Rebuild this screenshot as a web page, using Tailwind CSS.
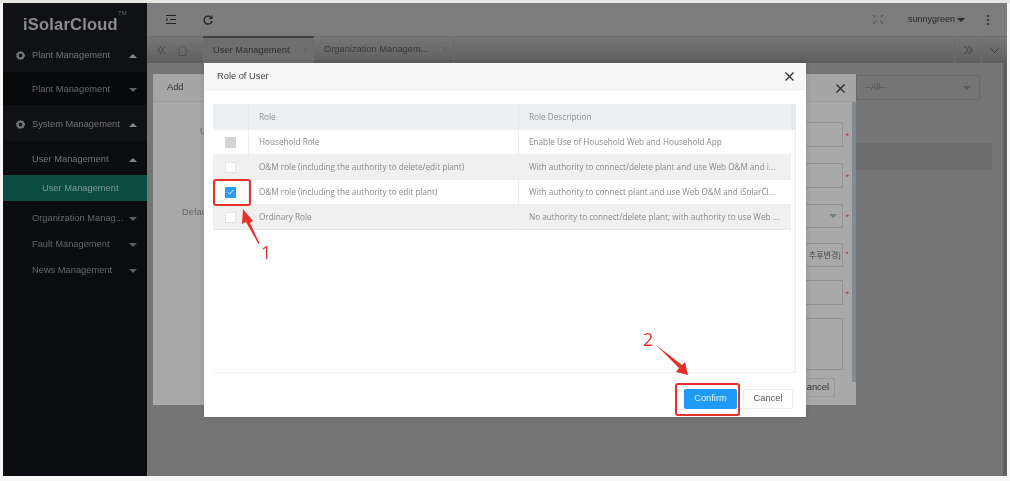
<!DOCTYPE html>
<html lang="en">
<head>
  <meta charset="UTF-8">
  <meta name="viewport" content="width=device-width, initial-scale=1.0">
  <script src="https://cdn.jsdelivr.net/npm/@tailwindcss/browser@4"></script>
  <title>iSolarCloud</title>
</head>
<body class="bg-white">
<div class="relative w-[1010px] h-[481px] overflow-hidden whitespace-nowrap bg-[#f7f7f7] font-['Liberation_Sans',sans-serif] blur-[0.6px]">
  <div class="h-[3px] bg-[#e8e6e2]"></div>
  <div class="flex h-[473px] ml-[3px] mr-[3px]">

    <!-- sidebar -->
    <aside class="w-[144px] shrink-0 bg-[#0b0c0f] text-[#666768] text-[9.3px]">
      <div class="h-[33px] relative pl-[20px] pt-[9px] text-[16.5px] leading-[24px] font-bold tracking-[0.2px] text-[#8c8c8c] bg-[#101114]">iSolarCloud<span class="absolute left-[115px] top-[6px] text-[6px] leading-[8px] font-normal text-[#666]">TM</span></div>
      <div class="h-[36px] pt-[3px] flex items-center pl-[13px] pr-[10px] bg-[#101114] text-[#737475]">
        <svg class="w-[9px] h-[9px] mr-[3px]" viewBox="0 0 10 10"><circle cx="5" cy="5" r="3.2" fill="none" stroke="#77787a" stroke-width="2.2"/><circle cx="5" cy="5" r="4.4" fill="none" stroke="#77787a" stroke-width="1.2" stroke-dasharray="1.4 1.4"/></svg>
        <span class="ml-[4px] flex-1">Plant Management</span>
        <svg class="w-[8px] h-[4px]" viewBox="0 0 8 4"><path d="M0 4L4 0L8 4Z" fill="#85868a"/></svg>
      </div>
      <div class="h-[33px] pt-[3px] flex items-center pl-[29px] pr-[10px] bg-[#08090b]">
        <span class="flex-1">Plant Management</span>
        <svg class="w-[8px] h-[4px]" viewBox="0 0 8 4"><path d="M0 0L8 0L4 4Z" fill="#5f6063"/></svg>
      </div>
      <div class="h-[36px] pt-[3px] flex items-center pl-[13px] pr-[10px] bg-[#101114] text-[#737475]">
        <svg class="w-[9px] h-[9px] mr-[3px]" viewBox="0 0 10 10"><circle cx="5" cy="5" r="3.2" fill="none" stroke="#77787a" stroke-width="2.2"/><circle cx="5" cy="5" r="4.4" fill="none" stroke="#77787a" stroke-width="1.2" stroke-dasharray="1.4 1.4"/></svg>
        <span class="ml-[4px] flex-1">System Management</span>
        <svg class="w-[8px] h-[4px]" viewBox="0 0 8 4"><path d="M0 4L4 0L8 4Z" fill="#85868a"/></svg>
      </div>
      <div class="h-[34px] pt-[3px] flex items-center pl-[29px] pr-[10px] text-[#737475]">
        <span class="flex-1">User Management</span>
        <svg class="w-[8px] h-[4px]" viewBox="0 0 8 4"><path d="M0 4L4 0L8 4Z" fill="#85868a"/></svg>
      </div>
      <div class="h-[26px] pt-[2px] flex items-center pl-[39px] bg-[#0a4c42] text-[#7e9a94]">User Management</div>
      <div class="h-[33px] pt-[2px] flex items-center pl-[29px] pr-[10px]">
        <span class="flex-1">Organization Manag...</span>
        <svg class="w-[8px] h-[4px]" viewBox="0 0 8 4"><path d="M0 0L8 0L4 4Z" fill="#5f6063"/></svg>
      </div>
      <div class="h-[26px] -mt-[3px] pt-[2px] flex items-center pl-[29px] pr-[10px]">
        <span class="flex-1">Fault Management</span>
        <svg class="w-[8px] h-[4px]" viewBox="0 0 8 4"><path d="M0 0L8 0L4 4Z" fill="#5f6063"/></svg>
      </div>
      <div class="h-[26px] pt-[2px] flex items-center pl-[29px] pr-[10px]">
        <span class="flex-1">News Management</span>
        <svg class="w-[8px] h-[4px]" viewBox="0 0 8 4"><path d="M0 0L8 0L4 4Z" fill="#5f6063"/></svg>
      </div>
    </aside>

    <!-- main -->
    <div class="flex-1 flex flex-col bg-[#747474] text-[#2f2f2f]">
      <header class="h-[33px] flex items-center bg-[#7c7c7c] text-[9px]">
        <svg class="ml-[19px] w-[10px] h-[9px]" viewBox="0 0 10 9" fill="none" stroke="#222" stroke-width="1"><path d="M0 .5H10M4 4.5H10M0 8.5H10M0 3L2 4.5L0 6"/></svg>
        <svg class="ml-[27px] w-[10px] h-[10px]" viewBox="0 0 10 10" fill="none" stroke="#222" stroke-width="1.3"><path d="M8.6 3.2A4 4 0 1 0 9 6"/><path d="M9 .6V3.6H6" stroke-width="1"/></svg>
        <svg class="ml-auto w-[10px] h-[9px]" viewBox="0 0 10 9" fill="none" stroke="#505050" stroke-width=".8"><path d="M0 0L3 3M0 2V0H2M10 0L7 3M8 0H10V2M0 9L3 6M0 7V9H2M10 9L7 6M8 9H10V7"/></svg>
        <span class="ml-[25px] text-[#2a2a2a]">sunnygreen</span>
        <svg class="ml-[2px] w-[8px] h-[4px]" viewBox="0 0 8 4"><path d="M0 0L8 0L4 4Z" fill="#2a2a2a"/></svg>
        <span class="ml-[22px] mr-[18px] w-[2px] h-[10px] border-l-2 border-dotted border-[#3a3a3a]"></span>
      </header>
      <nav class="h-[27px] flex items-center bg-linear-to-b from-[#777] to-[#5f5f5f] text-[9.3px] border-t border-[#6f6f6f]">
        <div class="w-[29px] flex justify-center">
          <svg class="w-[9px] h-[8px]" viewBox="0 0 9 8" fill="none" stroke="#333" stroke-width=".8"><path d="M4.500 0L.7 4L4.500 8M8.500 0L4.700 4L8.500 8"/></svg>
        </div>
        <svg class="ml-[1px] w-[11px] h-[11px]" viewBox="0 0 11 11" fill="none" stroke="#4a4a4a" stroke-width=".8"><path d="M.5 5.500L5.500 .7L10.500 5.500M2 4.500V10.500H9V4.500"/></svg>
        <div class="ml-[15px] w-[111px] h-[27px] -mt-[1px] flex items-center pl-[10px] border-t-2 border-[#3f3f3f] bg-[#6e6e6e]">User Management<span class="ml-[13px] text-[#5d5d5d]">×</span></div>
        <div class="w-[140px] h-[26px] flex items-center pl-[10px] border-r border-[#6a6a6a] text-[#383838]">Organization Managem...<span class="ml-[14px] text-[#5d5d5d]">×</span></div>
        <div class="ml-auto w-[27px] h-full border-l border-[#6c6c6c] flex items-center justify-center">
          <svg class="w-[9px] h-[8px]" viewBox="0 0 9 8" fill="none" stroke="#333" stroke-width=".8"><path d="M.5 0L4.300 4L.5 8M4.500 0L8.300 4L4.500 8"/></svg>
        </div>
        <div class="w-[26px] h-full border-l border-[#6c6c6c] flex items-center justify-center">
          <svg class="w-[9px] h-[5px]" viewBox="0 0 9 5" fill="none" stroke="#333" stroke-width=".9"><path d="M.5 .5L4.500 4.500L8.500 .5"/></svg>
        </div>
      </nav>
      <div class="flex-1 relative flex items-start justify-end pt-[12px] pr-[27px] bg-[#757575]">
        <div class="w-[124px] h-[25px] border border-[#6a6a6a] flex items-center justify-between pl-[8px] pr-[8px] text-[8.500px] text-[#555]">--All--
          <svg class="w-[8px] h-[4px]" viewBox="0 0 8 4"><path d="M0 0L8 0L4 4Z" fill="#5a5a5a"/></svg>
        </div>
        <div class="absolute right-[15px] top-[80px] w-[140px] h-[27px] bg-[#6d6d6d]"></div>
        <div class="absolute right-0 top-0 w-[4px] h-[413px] bg-[#5e5e5e]"></div>
      </div>
    </div>
  </div>

  <!-- add dialog, under the role dialog -->
  <div class="absolute left-[153px] top-[74px] w-[703px] h-[331px] flex flex-col bg-[#a9a9a9] text-[#333] text-[9.300px]">
    <div class="h-[28px] pt-[1px] shrink-0 flex items-center justify-between pl-[14px] pr-[11px] bg-[#a6a6a6] border-b border-[#9c9c9c]">
      <span>Add</span>
      <svg class="w-[9px] h-[9px]" viewBox="0 0 9 9" stroke="#2a2a2a" stroke-width="1.300"><path d="M.5 .5L8.500 8.500M8.500 .5L.5 8.500"/></svg>
    </div>
    <div class="relative flex-1 flex flex-col items-end pr-[13px] pt-[20px] text-[#666]">
      <div class="absolute right-0 top-0 w-[4px] h-[280px] bg-[#808a90]"></div>
      <span class="absolute left-[47px] top-[23px]">User</span>
      <span class="absolute left-[29px] top-[104px]">Default</span>
      <div class="relative w-[300px] h-[25px] border border-[#929292]"><span class="absolute -right-[7px] top-[7px] text-[#b03a3a]">*</span></div>
      <div class="relative w-[300px] h-[25px] mt-[16px] border border-[#929292]"><span class="absolute -right-[7px] top-[7px] text-[#b03a3a]">*</span></div>
      <div class="relative w-[300px] h-[24px] mt-[16px] border border-[#929292] flex items-center justify-end pr-[5px]">
        <svg class="w-[8px] h-[4px]" viewBox="0 0 8 4"><path d="M0 0L8 0L4 4Z" fill="#7d7d7d"/></svg>
        <span class="absolute -right-[7px] top-[6px] text-[#b03a3a]">*</span>
      </div>
      <div class="relative w-[300px] h-[24px] mt-[15px] border border-[#929292] flex items-center justify-end pr-[1px] text-[8px] text-[#444] font-['Noto_Sans_CJK_KR','Liberation_Sans',sans-serif]">추후변경)<span class="absolute -right-[7px] top-[5px] text-[#b03a3a]">*</span></div>
      <div class="relative w-[300px] h-[25px] mt-[13px] border border-[#929292]"><span class="absolute -right-[7px] top-[7px] text-[#b03a3a]">*</span></div>
      <div class="w-[300px] h-[52px] mt-[13px] border border-[#929292]"></div>
    </div>
    <div class="absolute right-[21px] bottom-[8px] w-[60px] h-[19px] pt-[1px] border border-[#999] flex items-center justify-end pr-[5px] text-[#333]">Cancel</div>
  </div>

  <!-- role dialog -->
  <div class="absolute left-[204px] top-[63px] w-[602px] h-[354px] flex flex-col bg-white shadow-[0_0_6px_rgba(0,0,0,0.15)] font-['Open_Sans',sans-serif] text-[8.200px] text-[#8a8a8a]">
    <div class="h-[27px] pt-[1px] shrink-0 flex items-center justify-between pl-[13px] pr-[12px] bg-[#f7f7f7] border-b border-[#eeeeee] font-['Liberation_Sans',sans-serif] text-[9.300px] text-[#444]">
      <span>Role of User</span>
      <svg class="w-[9px] h-[9px]" viewBox="0 0 9 9" stroke="#333" stroke-width="1.300"><path d="M.5 .5L8.500 8.500M8.500 .5L.5 8.500"/></svg>
    </div>
    <div class="ml-[9px] mt-[14px] w-[583px] h-[269px] border-r border-b border-[#eeeeee]">
      <div class="h-[26px] grid grid-cols-[36px_270px_272px_5px] items-stretch bg-[#edf0f3] text-[#8d9094]">
        <div class="border-r border-[#e4e7ea]"></div>
        <div class="flex items-center pl-[10px] border-r border-[#e4e7ea]">Role</div>
        <div class="flex items-center pl-[10px]">Role Description</div>
        <div class="bg-[#e6e8ea]"></div>
      </div>
      <div class="w-[578px] h-[24px] grid grid-cols-[36px_270px_272px] items-stretch bg-white">
        <div class="flex items-center justify-center border-r border-[#eeeeee]"><span class="w-[11px] h-[11px] bg-[#d4d4d4]"></span></div>
        <div class="flex items-center pl-[10px] border-r border-[#eeeeee]">Household Role</div>
        <div class="flex items-center pl-[10px]">Enable Use of Household Web and Household App</div>
      </div>
      <div class="w-[578px] h-[26px] grid grid-cols-[36px_270px_272px] items-stretch bg-[#f0f0f0]">
        <div class="flex items-center justify-center border-r border-[#eeeeee]"><span class="w-[11px] h-[11px] bg-white border border-[#e4e4e4]"></span></div>
        <div class="flex items-center pl-[10px] border-r border-[#eeeeee]">O&amp;M role (including the authority to delete/edit plant)</div>
        <div class="flex items-center pl-[10px]">With authority to connect/delete plant and use Web O&amp;M and i...</div>
      </div>
      <div class="w-[578px] h-[24px] grid grid-cols-[36px_270px_272px] items-stretch bg-white">
        <div class="flex items-center justify-center border-r border-[#eeeeee]">
          <span class="w-[11px] h-[11px] bg-[#2c9cf2] flex items-center justify-center">
            <svg class="w-[7px] h-[6px]" viewBox="0 0 7 6" fill="none" stroke="#dff0fc" stroke-width="1"><path d="M.5 3L2.700 5L6.500 .8"/></svg>
          </span>
        </div>
        <div class="flex items-center pl-[10px] border-r border-[#eeeeee]">O&amp;M role (including the authority to edit plant)</div>
        <div class="flex items-center pl-[10px]">With authority to connect plant and use Web O&amp;M and iSolarCl...</div>
      </div>
      <div class="w-[578px] h-[26px] grid grid-cols-[36px_270px_272px] items-stretch bg-[#f0f0f0] border-b border-[#e9e9e9]">
        <div class="flex items-center justify-center pt-[1px] border-r border-[#eeeeee]"><span class="w-[11px] h-[11px] bg-white border border-[#e4e4e4]"></span></div>
        <div class="flex items-center pl-[10px] pt-[1px] border-r border-[#eeeeee]">Ordinary Role</div>
        <div class="flex items-center pl-[10px] pt-[1px]">No authority to connect/delete plant; with authority to use Web ...</div>
      </div>
    </div>
    <div class="flex justify-end gap-[6px] mt-[16px] pr-[13px] font-['Liberation_Sans',sans-serif] text-[9.300px]">
      <button class="w-[53px] h-[20px] rounded-[2px] bg-[#1f9bf5] text-[#e6f4fe]">Confirm</button>
      <button class="w-[50px] h-[20px] bg-white border border-[#eeeeee] text-[#555]">Cancel</button>
    </div>
  </div>

  <!-- red annotations -->
  <div class="absolute left-[213px] top-[179px] w-[38px] h-[27px] border-2 border-[#e8302a] rounded-[3px]"></div>
  <div class="absolute left-[675px] top-[383px] w-[65px] h-[33px] border-2 border-[#e8302a] rounded-[3px]"></div>
  <svg class="absolute left-0 top-0 w-[1010px] h-[481px] pointer-events-none" viewBox="0 0 1010 481">
    <path d="M259.500 243L250 223L253 221L243 209L242 224L246 222L258.500 244Z" fill="#e8302a"/>
    <path d="M656 345L682 365L685 362L688 375L676 372L679 368Z" fill="#e8302a"/>
  </svg>
  <span class="absolute left-[261px] top-[241px] text-[18px] leading-[22px] font-medium text-[#e8302a] font-['Open_Sans',sans-serif]">1</span>
  <span class="absolute left-[643px] top-[328px] text-[18px] leading-[22px] font-medium text-[#e8302a] font-['Open_Sans',sans-serif]">2</span>
</div>
</body>
</html>
